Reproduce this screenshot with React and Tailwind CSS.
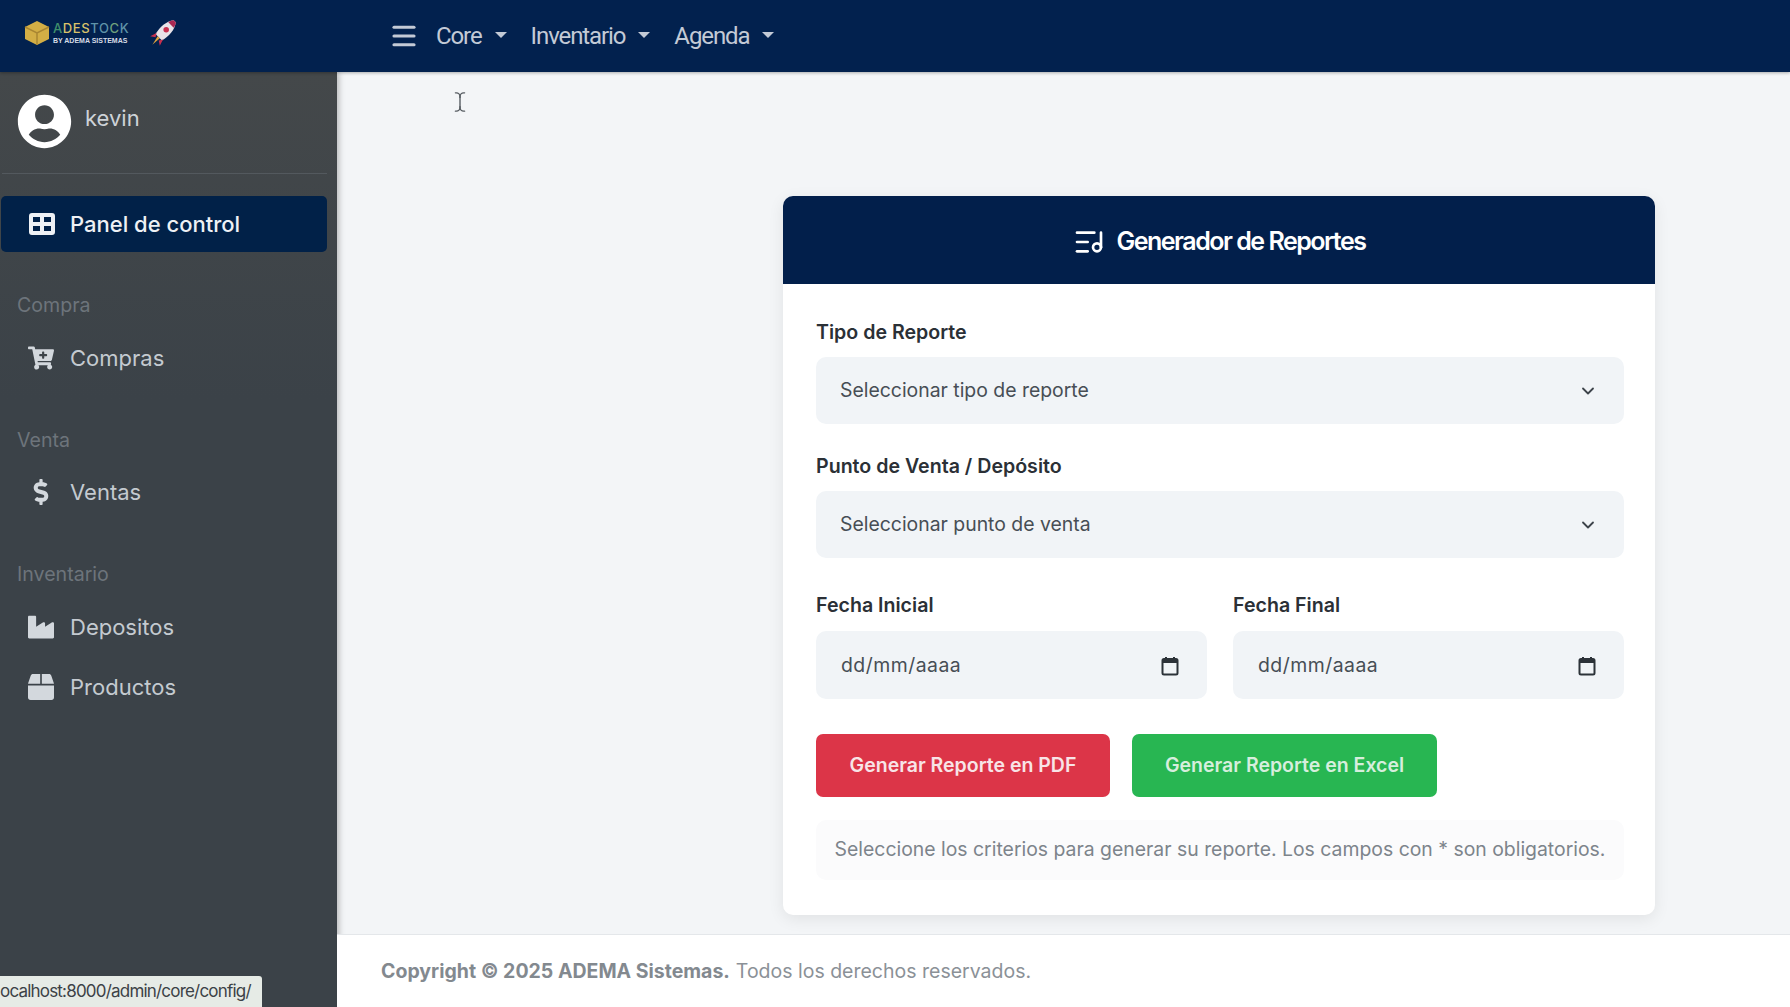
import { Menu, ChevronDown, ListMusic, TextCursor } from 'lucide-react'
import { FaCartPlus, FaDollarSign, FaIndustry, FaBox, FaUserCircle } from 'react-icons/fa'

const inter = 'font-["Inter","Noto_Sans",sans-serif]'

const Caret = () => (
    <span className="ml-[13px] mt-[-3px] border-x-[6px] border-t-[6px] border-x-transparent border-t-[#c3cad6]"></span>
)

const Logo = () => (
    <div className="flex items-center">
        <svg width="28" height="28" viewBox="0 0 28 28">
            <path d="M14 2 L26 8 V20 L14 26 L2 20 V8 Z" fill="#d3ae45" />
            <path d="M2 8 L14 14 L26 8 M14 14 V26" fill="none" stroke="#a98632" strokeWidth="1.5" />
        </svg>
        <div className="ml-[2px] flex flex-col leading-none">
            <span className="text-[13px] font-medium tracking-[0.6px] font-['Inter',sans-serif]">
                <span className="text-[#3f8f6b]">A</span>
                <span className="text-[#d9c26a]">DES</span>
                <span className="text-[#5f93a8]">TO</span>
                <span className="text-[#6fa07c]">C</span>
                <span className="text-[#5f93a8]">K</span>
            </span>
            <span className="mt-[2px] text-[7px] font-bold text-[#d5dbe5] font-['Liberation_Sans',sans-serif] whitespace-nowrap">BY ADEMA SISTEMAS</span>
        </div>
    </div>
)

const Rocket = () => (
    <svg width="32" height="32" viewBox="0 0 30 30" className="ml-[18px]">
        <path d="M25 3 C18 4 12 9 8 16 L14 22 C21 18 26 12 27 5 Z" fill="#e9e3e8" />
        <path d="M25 3 C23 3 21 4 20 5 L25 10 C26 9 27 7 27 5 Z" fill="#a92852" />
        <path d="M9 15 L3 18 L8 19 Z M15 21 L12 27 L11 22 Z" fill="#c9304f" />
        <path d="M10 18 L12 20 L5 26 Z" fill="#e0a23c" />
        <circle cx="18" cy="12" r="2.6" fill="#c9304f" />
    </svg>
)

const SectionLabel = ({ children, className }) => (
    <div className={`pl-[17px] text-[19.6px] leading-[24px] text-[#6d747b] ${className}`}>{children}</div>
)

const NavItem = ({ icon, label, className }) => (
    <div className={`flex h-[40px] items-center text-[22px] text-[#c4cad0] ${className}`}>
        <span className="flex w-[70px] justify-center pl-[16px] pr-[4px] text-[26px] text-[#d3d8dd]">{icon}</span>
        {label}
    </div>
)

const Field = ({ label, value, className }) => (
    <div className={className}>
        <label className="block text-[19.6px] font-semibold leading-[24px] text-[#2b3036]">{label}</label>
        <div className="mt-[13px] flex h-[67px] items-center justify-between rounded-[10px] bg-[#f1f4f7] pl-[24px] pr-[26px] text-[19.4px] text-[#474e55]">
            {value}
            <ChevronDown size={20} strokeWidth={2.2} className="text-[#3d434a]" />
        </div>
    </div>
)

const DateField = ({ label }) => (
    <div className="flex-1">
        <label className="block text-[19.6px] font-semibold leading-[24px] text-[#2b3036]">{label}</label>
        <div className="mt-[14px] flex h-[68px] items-center justify-between rounded-[10px] bg-[#f1f4f7] pl-[25px] pr-[28px] pt-[1px] text-[19.4px] tracking-[0.5px] text-[#474e55]">
            dd/mm/aaaa
            <svg width="18" height="20" viewBox="0 0 18 20" className="text-[#2c3238]">
                <path d="M4 1h2v3H4zM12 1h2v3h-2z" fill="currentColor" />
                <rect x="1.5" y="3" width="15" height="15.5" rx="1.5" fill="none" stroke="currentColor" strokeWidth="2" />
                <rect x="1.5" y="3" width="15" height="4" fill="currentColor" />
            </svg>
        </div>
    </div>
)

const App = () => {
    return (
        <div className={`relative flex h-screen flex-col overflow-hidden bg-[#f3f5f7] ${inter}`}>
            <header className="relative z-10 flex h-[72px] shrink-0 items-center bg-[#02214e] shadow-[0_1px_3px_rgba(0,0,0,0.3)]">
                <div className="flex w-[337px] items-center pl-[23px] pb-[6px]">
                    <Logo />
                    <Rocket />
                </div>
                <nav className="ml-[52px] flex items-center text-[24px] tracking-[-1.1px] text-[#c3cad6] font-['Roboto',sans-serif]">
                    <Menu size={30} strokeWidth={2.5} className="mr-[17px]" />
                    <span>Core</span>
                    <Caret />
                    <span className="ml-[24px]">Inventario</span>
                    <Caret />
                    <span className="ml-[24px]">Agenda</span>
                    <Caret />
                </nav>
            </header>

            <div className="flex min-h-0 flex-1">
                <aside className="w-[337px] shrink-0 bg-linear-to-b from-[#44484a] to-[#3b4248] to-[35%] shadow-[2px_0_6px_rgba(0,0,0,0.25)]">
                    <div className="mx-[2px] flex h-[102px] w-[325px] items-center border-b border-[#53595e] pl-[15px] pb-[2px]">
                        <FaUserCircle size={55} className="text-white" />
                        <span className="ml-[13px] mb-[6px] text-[22px] text-[#ced3d8]">kevin</span>
                    </div>
                    <div className="ml-[1px] mt-[22px] flex h-[56px] w-[326px] items-center rounded-[5px] bg-[#012148] text-[22px] font-medium text-[#eef1f5]">
                        <svg width="26" height="24" viewBox="0 0 26 24" className="ml-[28px] mr-[15px]">
                            <path fillRule="evenodd" fill="#eef1f5" d="M3 1h20a3 3 0 0 1 3 3v16a3 3 0 0 1-3 3H3a3 3 0 0 1-3-3V4a3 3 0 0 1 3-3zM4 5v5h7V5zm11 0v5h7V5zM4 14v5h7v-5zm11 0v5h7v-5z" />
                        </svg>
                        Panel de control
                    </div>
                    <SectionLabel className="mt-[41px]">Compra</SectionLabel>
                    <NavItem className="mt-[21px]" icon={<FaCartPlus />} label="Compras" />
                    <SectionLabel className="mt-[50px]">Venta</SectionLabel>
                    <NavItem className="mt-[20px]" icon={<FaDollarSign />} label="Ventas" />
                    <SectionLabel className="mt-[50px]">Inventario</SectionLabel>
                    <NavItem className="mt-[21px]" icon={<FaIndustry />} label="Depositos" />
                    <NavItem className="mt-[20px]" icon={<FaBox />} label="Productos" />
                </aside>

                <main className="flex min-w-0 flex-1 flex-col">
                    <div className="flex-1 pl-[446px] pt-[124px]">
                        <div className="w-[872px] rounded-[10px] bg-white shadow-[0_4px_16px_rgba(0,0,0,0.08)]">
                            <div className="flex h-[88px] items-center justify-center rounded-t-[10px] bg-[#021f4b] pt-[4px] text-[25px] font-semibold tracking-[-1.5px] text-white">
                                <ListMusic size={32} strokeWidth={2} className="mr-[12px]" />
                                Generador de Reportes
                            </div>
                            <div className="pl-[33px] pr-[31px] pt-[36px] pb-[35px]">
                                <Field label="Tipo de Reporte" value="Seleccionar tipo de reporte" />
                                <Field className="mt-[30px]" label="Punto de Venta / Depósito" value="Seleccionar punto de venta" />
                                <div className="mt-[35px] flex gap-[26px]">
                                    <DateField label="Fecha Inicial" />
                                    <DateField label="Fecha Final" />
                                </div>
                                <div className="mt-[35px] flex gap-[22px]">
                                    <button className="h-[63px] w-[294px] rounded-[7px] bg-[#dc3548] text-[19.5px] font-semibold text-[#f8e4e7]">Generar Reporte en PDF</button>
                                    <button className="h-[63px] w-[305px] rounded-[7px] bg-[#28b652] text-[19.5px] font-semibold text-[#d6eedd]">Generar Reporte en Excel</button>
                                </div>
                                <div className="mt-[23px] flex h-[60px] items-center justify-center rounded-[10px] bg-[#fbfbfc] text-[19.4px] whitespace-nowrap text-[#7d848b]">
                                    Seleccione los criterios para generar su reporte. Los campos con * son obligatorios.
                                </div>
                            </div>
                        </div>
                    </div>
                    <footer className="flex h-[73px] shrink-0 items-center border-t border-[#e4e7ea] bg-white pl-[44px] pt-[1px] text-[19.5px] text-[#8b9197]">
                        <span className="font-bold text-[#83898f]">Copyright © 2025 ADEMA Sistemas.</span>
                        <span className="ml-[6px]">Todos los derechos reservados.</span>
                    </footer>
                </main>
            </div>

            <TextCursor size={22} strokeWidth={1.5} className="absolute left-[449px] top-[91px] text-[#555b60]" />
            <div className="absolute bottom-0 left-0 flex h-[31px] w-[262px] items-center overflow-hidden rounded-tr-[3px] bg-[#e6ebe6] text-[17px] tracking-[-0.8px] whitespace-nowrap text-[#3c4246]">
                <span>ocalhost:8000/admin/core/config/</span>
            </div>
        </div>
    )
}

export default App
